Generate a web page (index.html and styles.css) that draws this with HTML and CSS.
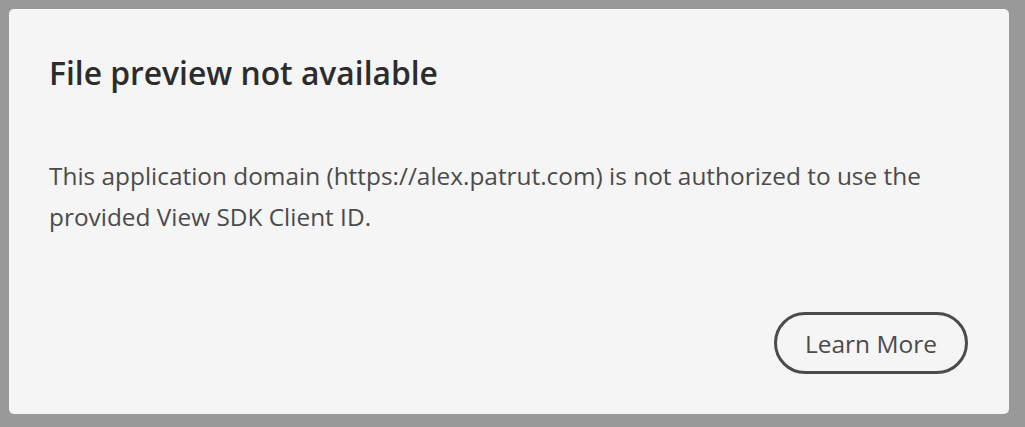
FILE: index.html
```html
<!DOCTYPE html>
<html>
<head>
<meta charset="utf-8">
<link rel="stylesheet" href="styles.css">
</head>
<body>
<div class="dialog">
  <h1 class="title">File preview not available</h1>
  <p class="message">This application domain (https://alex.patrut.com) is not authorized to use the provided View SDK Client ID.</p>
  <div class="actions">
    <button class="btn">Learn More</button>
  </div>
</div>
</body>
</html>
```
FILE: styles.css
```css
html, body {
  margin: 0;
  height: 100%;
}
body {
  background: #999999;
  padding: 9px 16px 13px 9px;
  box-sizing: border-box;
  font-family: "Open Sans", "Noto Sans", sans-serif;
}
.dialog {
  background: #f5f5f5;
  border-radius: 5px;
  width: 1000px;
  height: 405px;
  box-sizing: border-box;
  padding: 41px 40px 40px 40px;
  display: flex;
  flex-direction: column;
}
.title {
  margin: 0;
  font-size: 31.8px;
  line-height: 46px;
  font-weight: 600;
  color: #2c2c2c;
}
.message {
  margin: 59px 0 0 0;
  font-size: 24.4px;
  line-height: 41px;
  color: #4b4b4b;
}
.actions {
  margin-top: auto;
  display: flex;
  justify-content: flex-end;
}
.btn {
  font-family: inherit;
  font-size: 24.5px;
  color: #4b4b4b;
  background: transparent;
  border: 3px solid #4b4b4b;
  border-radius: 31px;
  width: 194px;
  height: 62px;
  margin-right: 1px;
  padding: 0;
}
```
